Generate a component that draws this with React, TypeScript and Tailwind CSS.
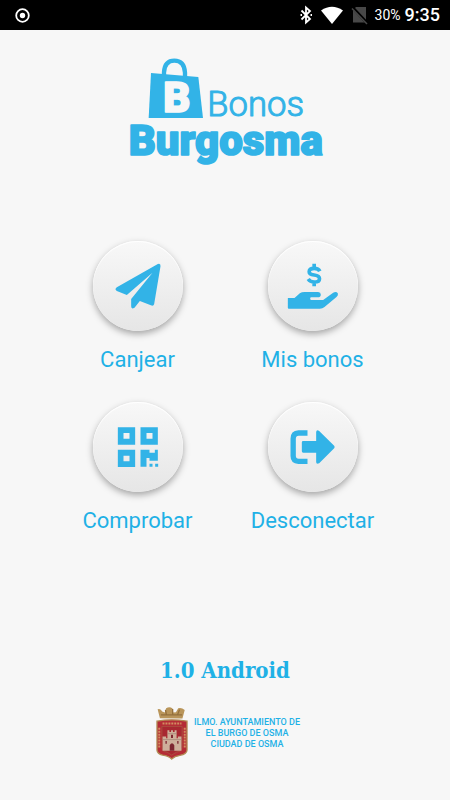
import React from 'react';

const blue = '#32b3e7';

function StatusBar() {
  return (
    <header className="flex h-[30px] items-center justify-between bg-black pr-2.5 pl-[15px] text-white">
      <svg className="h-[15px] w-[15px]" viewBox="0 0 15 15" aria-hidden="true">
        <circle cx="7.5" cy="7.5" r="6.3" fill="none" stroke="white" strokeWidth="1.8" />
        <circle cx="7.5" cy="7.5" r="2.7" fill="white" />
      </svg>
      <div className="flex items-center">
        <svg className="h-5 w-[75px]" viewBox="0 0 75 20" fill="none" aria-hidden="true">
          <path d="M1.500 5.500 L10 14 L6 17.500 V2.500 L10 6 L1.500 14.500 M0.500 10 H2 M10.500 10 H12" stroke="white" strokeWidth="1.800" />
          <path d="M21 5.500 Q32 -2 43 5.500 L32 19 Z" fill="white" />
          <path d="M56 2 H66 V17.500 H53 V5 Z" fill="#484848" />
          <path d="M53 3 L68 19" stroke="black" strokeWidth="3" />
          <path d="M52 3.500 L67 19" stroke="#484848" strokeWidth="1.500" />
        </svg>
        <span className="mr-1 text-sm">30%</span>
        <span className="text-lg font-medium">9:35</span>
      </div>
    </header>
  );
}

function Logo() {
  return (
    <svg className="h-[125px] w-[220px]" viewBox="0 0 660 375" role="img" aria-label="Bonos Burgosma" fill={blue}>
      <path d="M132 80 V67 Q134 32 163 32 Q193 32 195 68 V84" fill="none" stroke={blue} strokeWidth="13" />
      <path d="M93 69 L235 81 L249 204 H86 Z" />
      <text x="130" y="186" fontFamily="Roboto, sans-serif" fontSize="126" fontWeight="900" fill="#f7f7f7" stroke="#f7f7f7" strokeWidth="5" strokeLinejoin="round">B</text>
      <text x="262" y="198" fontFamily="Roboto, sans-serif" fontSize="104" fontWeight="300" stroke={blue} strokeWidth="3" strokeLinejoin="round">Bonos</text>
      <text x="26" y="315" fontFamily="Roboto, sans-serif" fontSize="126" fontWeight="900" stroke={blue} strokeWidth="5" strokeLinejoin="round">Burgosma</text>
    </svg>
  );
}

function Action({ label, viewBox, children }: { label: string; viewBox: string; children: React.ReactNode }) {
  return (
    <button type="button" className="flex flex-col items-center gap-[11px] text-[22px] leading-[36px] text-[#1fb1e6]">
      <span className="block h-[90px] w-[90px] rounded-full bg-linear-to-b from-[#f8f8f8] to-[#e6e6e6] shadow-[0_3px_7px_rgba(0,0,0,0.34),inset_0_1px_1px_white]">
        <svg className="h-full w-full" viewBox={viewBox} fill={blue} aria-hidden="true">
          {children}
        </svg>
      </span>
      {label}
    </button>
  );
}

function Crest() {
  return (
    <svg className="h-[54px] w-[32px]" viewBox="0 0 98 164" preserveAspectRatio="none" aria-hidden="true">
      <path d="M12 37 L5 10 Q14 6 19 17 L27 20 L31 7 Q41 0 50 7 L53 20 L61 19 L68 7 Q78 4 88 12 L81 38 Z" fill="#b9955a" />
      <path d="M15 27 H80 M29 12 L32 27 M51 9 V27 M72 11 L66 27" stroke="#94703c" strokeWidth="4" />
      <path d="M3 46 Q48 38 95 46 V134 Q94 147 73 150 Q57 152 48 161 Q38 151 20 149 Q4 146 3 134 Z" fill="#b52c36" stroke="#b28c55" strokeWidth="4" />
      <path d="M18 62 H80 V126 Q78 138 63 140 L48 149 L34 140 Q18 139 18 125 Z" fill="#a82831" stroke="#a86043" strokeWidth="2" />
      <path d="M20 93 H31 V98 H35 V74 H41 V79 H46 V74 H52 V79 H57 V74 H63 V98 H67 V93 H78 V136 H20 Z" fill="#ceb09b" />
      <path d="M42 136 V119 Q49 107 56 119 V136 Z M29 106 H33 V115 H29 Z M65 106 H69 V115 H65 Z M46 87 H52 V97 H46 Z" fill="#7d2730" />
      <path d="M20 102 H78 M35 84 H63" stroke="#a28171" strokeWidth="2" />
      <path d="M20 53 H78 M10 66 V128 M88 66 V128" stroke="#d28e61" strokeWidth="6" strokeDasharray="6 3" />
    </svg>
  );
}

export default function App() {
  return (
    <div className="flex min-h-screen flex-col bg-[#f7f7f7] font-[Roboto,sans-serif]">
      <StatusBar />
      <main className="flex flex-1 flex-col items-center">
        <h1 className="mt-5 pl-2.5">
          <Logo />
        </h1>
        <nav className="mt-[66px] grid w-7/9 grid-cols-2 gap-y-6">
          <Action label="Canjear" viewBox="37.5 33 270 270">
            <path d="M232 102 Q241 99 240 109 L221 222 Q219 230 211 226 L178 213 L162 233 Q152 239 152 229 V207 L216 128 L139 195 L109 183 Q101 178 109 172 Z" />
          </Action>
          <Action label="Mis bonos" viewBox="52.5 33 270 270">
            <path d="M112 204 H132 L148 190 Q154 186 162 186 H203 Q211 187 211 194 Q210 202 202 202 H182 Q179 202 179 206 Q179 210 183 210 H218 L248 188 Q257 183 262 190 Q264 196 258 201 L222 231 Q216 236 208 236 H115 Q112 236 112 233 Z" />
            <path d="M208 124 Q204 115 191 115 Q176 115 176 125 Q176 133 191 135 Q207 137 207 146 Q207 156 191 156 Q179 156 173 147 M191 101 V115 M191 156 V169" fill="none" stroke={blue} strokeWidth="11" />
          </Action>
          <Action label="Comprobar" viewBox="52.5 22 270 270">
            <path fillRule="evenodd" d="M127 98 H179 V150 H127 Z M144 115 V132 H162 V115 Z M195 98 H247 V150 H195 Z M213 115 V132 H231 V115 Z M127 165 H179 V217 H127 Z M144 183 V200 H162 V183 Z M195 165 H222 V174 H238 V165 H247 V198 H222 V190 H213 V216 H195 Z M222 207 H231 V216 H222 Z M239 207 H248 V216 H239 Z" />
          </Action>
          <Action label="Desconectar" viewBox="82.5 22 270 270">
            <path d="M201 115 H174 Q158 116 158 132 V184 Q158 199 174 200 H201" fill="none" stroke={blue} strokeWidth="16" />
            <path d="M184 143 Q184 139 188 139 H227 V112 Q228 104 236 109 L281 153 Q284 157 281 161 L236 206 Q227 210 227 202 V174 H188 Q184 174 184 170 Z" />
          </Action>
        </nav>
        <footer className="mt-auto flex flex-col items-center pb-10">
          <p className="font-['DejaVu_Serif_Condensed','DejaVu_Serif',serif] text-[22px] leading-8 font-bold text-[#1fb1e6]">1.0 Android</p>
          <div className="mt-5 flex items-center gap-1.5 pl-1.5">
            <Crest />
            <p className="text-center text-[9px] leading-[11px] font-medium text-[#1fb1e6]">
              ILMO. AYUNTAMIENTO DE
              <br />
              EL BURGO DE OSMA
              <br />
              CIUDAD DE OSMA
            </p>
          </div>
        </footer>
      </main>
    </div>
  );
}
